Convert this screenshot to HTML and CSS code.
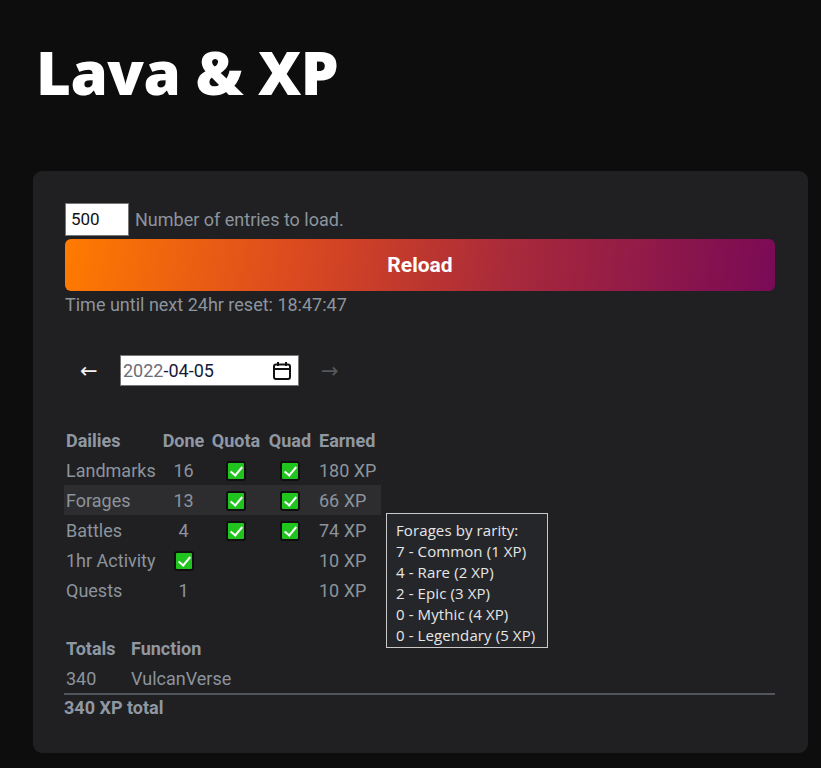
FILE: index.html
```html
<!DOCTYPE html>
<html lang="en">
  <head>
    <meta charset="UTF-8" />
    <meta name="viewport" content="width=device-width, initial-scale=1.0" />
    <title>Lava &amp; XP</title>
    <link rel="stylesheet" href="styles.css">
  </head>
  <body>
    <h1 class="title">Lava &amp; XP</h1>

    <div class="card">
      <div class="entries-row">
        <div class="entries-input">500</div>
        <span class="label">Number of entries to load.</span>
      </div>
      <button class="reload-btn">Reload</button>
      <div class="reset-time">Time until next 24hr reset: 18:47:47</div>

      <div class="date-row">
        <span class="arrow">&larr;</span>
        <div class="date-input">
          <span class="date-year">2022</span><span class="date-rest">-04-05</span>
          <svg class="cal-icon" width="20" height="20" viewBox="0 0 20 20">
            <rect x="2" y="3.5" width="16" height="14.5" rx="2" fill="none" stroke="#111" stroke-width="2" />
            <line x1="2" y1="8" x2="18" y2="8" stroke="#111" stroke-width="2" />
            <line x1="6" y1="1" x2="6" y2="5" stroke="#111" stroke-width="2" />
            <line x1="14" y1="1" x2="14" y2="5" stroke="#111" stroke-width="2" />
          </svg>
        </div>
        <span class="arrow disabled">&rarr;</span>
      </div>

      <table class="dailies">
        <thead>
          <tr>
            <th class="c-name">Dailies</th>
            <th class="c-done">Done</th>
            <th class="c-quota">Quota</th>
            <th class="c-quad">Quad</th>
            <th class="c-earned">Earned</th>
          </tr>
        </thead>
        <tbody>
          <tr>
            <td>Landmarks</td>
            <td class="center">16</td>
            <td class="center"><span class="check"></span></td>
            <td class="center"><span class="check"></span></td>
            <td>180 XP</td>
          </tr>
          <tr class="hover">
            <td>Forages</td>
            <td class="center">13</td>
            <td class="center"><span class="check"></span></td>
            <td class="center"><span class="check"></span></td>
            <td>66 XP</td>
          </tr>
          <tr>
            <td>Battles</td>
            <td class="center">4</td>
            <td class="center"><span class="check"></span></td>
            <td class="center"><span class="check"></span></td>
            <td>74 XP</td>
          </tr>
          <tr>
            <td>1hr Activity</td>
            <td class="center"><span class="check"></span></td>
            <td></td>
            <td></td>
            <td>10 XP</td>
          </tr>
          <tr>
            <td>Quests</td>
            <td class="center">1</td>
            <td></td>
            <td></td>
            <td>10 XP</td>
          </tr>
        </tbody>
      </table>

      <table class="totals">
        <thead>
          <tr>
            <th class="t-total">Totals</th>
            <th>Function</th>
          </tr>
        </thead>
        <tbody>
          <tr>
            <td>340</td>
            <td>VulcanVerse</td>
          </tr>
        </tbody>
      </table>
      <div class="grand-total">340 XP total</div>

      <div class="tooltip">
        <div>Forages by rarity:</div>
        <div>7 - Common (1 XP)</div>
        <div>4 - Rare (2 XP)</div>
        <div>2 - Epic (3 XP)</div>
        <div>0 - Mythic (4 XP)</div>
        <div>0 - Legendary (5 XP)</div>
      </div>
    </div>
  </body>
</html>
```

FILE: styles.css
```css
* {
  margin: 0;
  padding: 0;
  box-sizing: border-box;
}

html,
body {
  height: 100%;
  overflow: hidden;
}

body {
  background-color: #0d0d0d;
  font-family: "Roboto", "Liberation Sans", sans-serif;
  color: #8c949d;
}

.title {
  font-family: "Open Sans", "DejaVu Sans", sans-serif;
  font-weight: 800;
  font-size: 60px;
  line-height: 74px;
  color: #fff;
  margin: 35px 0 62px 36px;
  letter-spacing: -0.5px;
}

.card {
  position: relative;
  margin: 0 13px 0 33px;
  background-color: #202022;
  border-radius: 9px;
  padding: 32px 33px 34px 32px;
  font-size: 18px;
}

.entries-row {
  display: flex;
  align-items: center;
  gap: 6px;
}

.entries-input {
  width: 64px;
  height: 33px;
  background-color: #fff;
  border: 1px solid #767676;
  color: #111;
  padding: 0 5px;
  line-height: 31px;
  font-size: 17px;
}

.reload-btn {
  display: block;
  width: 100%;
  height: 52px;
  margin-top: 3px;
  border: none;
  border-radius: 6px;
  background: linear-gradient(100deg, #ff7b00 0%, #dc4a1f 32%, #a92a3a 62%, #790a56 100%);
  color: #fff;
  font-family: "Roboto", "Liberation Sans", sans-serif;
  font-weight: 700;
  font-size: 21px;
}

.reset-time {
  margin-top: 3px;
  line-height: 22px;
}

.date-row {
  display: flex;
  align-items: center;
  margin-top: 39px;
  padding-left: 15px;
  height: 31px;
}

.arrow {
  font-size: 21px;
  color: #f2f2f2;
  width: 21px;
  font-family: "DejaVu Sans", sans-serif;
}

.arrow.disabled {
  color: #55575b;
  margin-left: 22px;
}

.date-input {
  display: flex;
  align-items: center;
  width: 179px;
  height: 31px;
  margin-left: 19px;
  background-color: #fff;
  border: 1px solid #767676;
  padding: 0 6px 0 2px;
  font-size: 18px;
}

.date-year {
  color: #6b6f78;
}

.date-rest {
  color: #141a3a;
}

.cal-icon {
  margin-left: auto;
}

.dailies,
.totals {
  border-collapse: collapse;
  margin-left: -1px;
}

.dailies {
  margin-top: 39px;
  table-layout: fixed;
  width: 317px;
}

.dailies th,
.dailies td,
.totals th,
.totals td {
  height: 30px;
  padding: 0 2px;
  text-align: left;
  font-weight: 400;
  white-space: nowrap;
}

.dailies th,
.totals th {
  font-weight: 700;
  color: #8f98a2;
}

.c-name {
  width: 94px;
}

.c-done {
  width: 51px;
}

.c-quota {
  width: 54px;
}

.c-quad {
  width: 54px;
}

.c-earned {
  width: 64px;
}

.dailies th.c-done,
.dailies th.c-quota,
.dailies th.c-quad {
  text-align: center;
}

.dailies td.center {
  text-align: center;
}

.dailies tr.hover td {
  background-color: #2d2d2f;
}

.check {
  display: inline-block;
  width: 20px;
  height: 20px;
  vertical-align: middle;
  background-color: #21c41f;
  border: 2px solid #0f0f0f;
  border-radius: 3px;
  position: relative;
}

.check::after {
  content: "";
  position: absolute;
  left: 5px;
  top: 1px;
  width: 5px;
  height: 10px;
  border: solid #fff;
  border-width: 0 2px 2px 0;
  transform: rotate(40deg);
}

.totals {
  margin-top: 28px;
}

.t-total {
  width: 65px;
}

.grand-total {
  border-top: 2px solid #51555c;
  margin-left: -1px;
  padding-left: 0;
  font-weight: 700;
  line-height: 22px;
  padding-top: 2px;
  color: #8f98a2;
}

.tooltip {
  position: absolute;
  left: 353px;
  top: 342px;
  width: 162px;
  background-color: #25262a;
  border: 1px solid #c9c9c9;
  padding: 6px 9px 1px;
  font-family: "Open Sans", "Noto Sans", sans-serif;
  font-size: 15px;
  line-height: 21px;
  letter-spacing: 0.1px;
  color: #e6e6e6;
  white-space: nowrap;
}
```
